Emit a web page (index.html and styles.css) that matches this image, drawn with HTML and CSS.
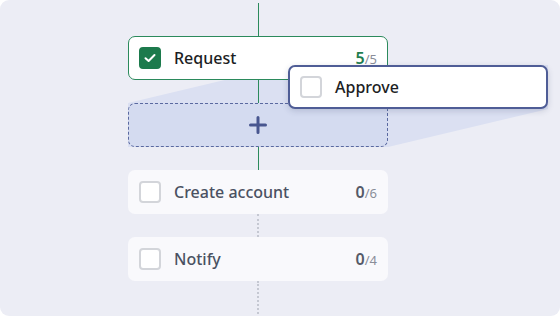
FILE: index.html
```html
<!DOCTYPE html>
<html lang="en">
<head>
    <meta charset="UTF-8">
    <title>Workflow steps</title>
    <link rel="stylesheet" href="styles.css">
</head>
<body>
    <div class="frame">
        <svg class="wedge" width="560" height="316" viewBox="0 0 560 316">
            <polygon points="128,103 288,65 548,65 548,109 388,147 128,147" fill="#dbe0f2"/>
        </svg>

        <div class="flow">
            <div class="link green tall"></div>
            <div class="step done">
                <span class="box checked">
                    <svg width="12" height="10" viewBox="0 0 12 10"><path d="M1.5 5.2 L4.6 8 L10.5 2" fill="none" stroke="#fff" stroke-width="2" stroke-linecap="round" stroke-linejoin="round"/></svg>
                </span>
                <span class="label">Request</span>
                <span class="count green-text"><b>5</b>/5</span>
            </div>
            <div class="link green"></div>
            <div class="drop">
                <svg width="18" height="18" viewBox="0 0 18 18"><path d="M9 1.5 V16.5 M1.5 9 H16.5" stroke="#48568f" stroke-width="3" stroke-linecap="round"/></svg>
            </div>
            <div class="link green"></div>
            <div class="step">
                <span class="box"></span>
                <span class="label muted">Create account</span>
                <span class="count"><b>0</b>/6</span>
            </div>
            <div class="link dotted"></div>
            <div class="step">
                <span class="box"></span>
                <span class="label muted">Notify</span>
                <span class="count"><b>0</b>/4</span>
            </div>
            <div class="link dotted end"></div>
        </div>

        <div class="step dragging">
            <span class="box"></span>
            <span class="label">Approve</span>
        </div>
    </div>
</body>
</html>
```

FILE: styles.css
```css
body {
    margin: 0;
    background: #ffffff;
    font-family: "Noto Sans", "Open Sans", sans-serif;
}
.frame {
    position: relative;
    width: 560px;
    height: 316px;
    background: #ecedf5;
    border-radius: 9px;
    overflow: hidden;
}
.wedge {
    position: absolute;
    left: 0;
    top: 0;
}
.flow {
    position: relative;
    display: flex;
    flex-direction: column;
    width: 260px;
    margin-left: 128px;
    padding-top: 3px;
}
.link {
    width: 0;
    height: 23px;
    margin-left: 130px;
}
.link.tall {
    height: 33px;
}
.link.green {
    border-left: 1px solid #2b8a5c;
}
.link.dotted {
    border-left: 2px dotted #c5c8d2;
    margin-left: 129px;
}
.link.end {
    height: 40px;
}
.step {
    display: flex;
    align-items: center;
    height: 44px;
    box-sizing: border-box;
    padding: 0 11px;
    background: #f9f9fc;
    border-radius: 7px;
}
.step.done {
    background: #ffffff;
    border: 1px solid #2b8a5c;
    padding: 0 10px;
}
.box {
    width: 22px;
    height: 22px;
    box-sizing: border-box;
    border: 2px solid #d3d5da;
    border-radius: 4px;
    background: #ffffff;
    display: flex;
    align-items: center;
    justify-content: center;
    flex-shrink: 0;
}
.box.checked {
    background: #1c7a4c;
    border-color: #1c7a4c;
}
.label {
    margin-left: 13px;
    font-size: 16px;
    font-weight: 500;
    color: #1c1e24;
    flex: 1;
}
.label.muted {
    color: #4a5162;
}
.count {
    font-size: 13px;
    color: #8a8e99;
    margin-right: 0;
}
.count b {
    font-size: 16px;
    font-weight: 600;
    color: #545a68;
}
.green-text b {
    color: #1f7d4e;
}
.drop {
    height: 44px;
    box-sizing: border-box;
    border: 1px dashed #5a69a0;
    border-radius: 7px;
    background: #d4dbf0;
    display: flex;
    align-items: center;
    justify-content: center;
}
.step.dragging {
    position: absolute;
    left: 288px;
    top: 65px;
    width: 260px;
    background: #ffffff;
    border: 2px solid #4f5d96;
    padding: 0 10px;
    box-shadow: 0 2px 6px rgba(40, 50, 90, 0.18);
}
```
